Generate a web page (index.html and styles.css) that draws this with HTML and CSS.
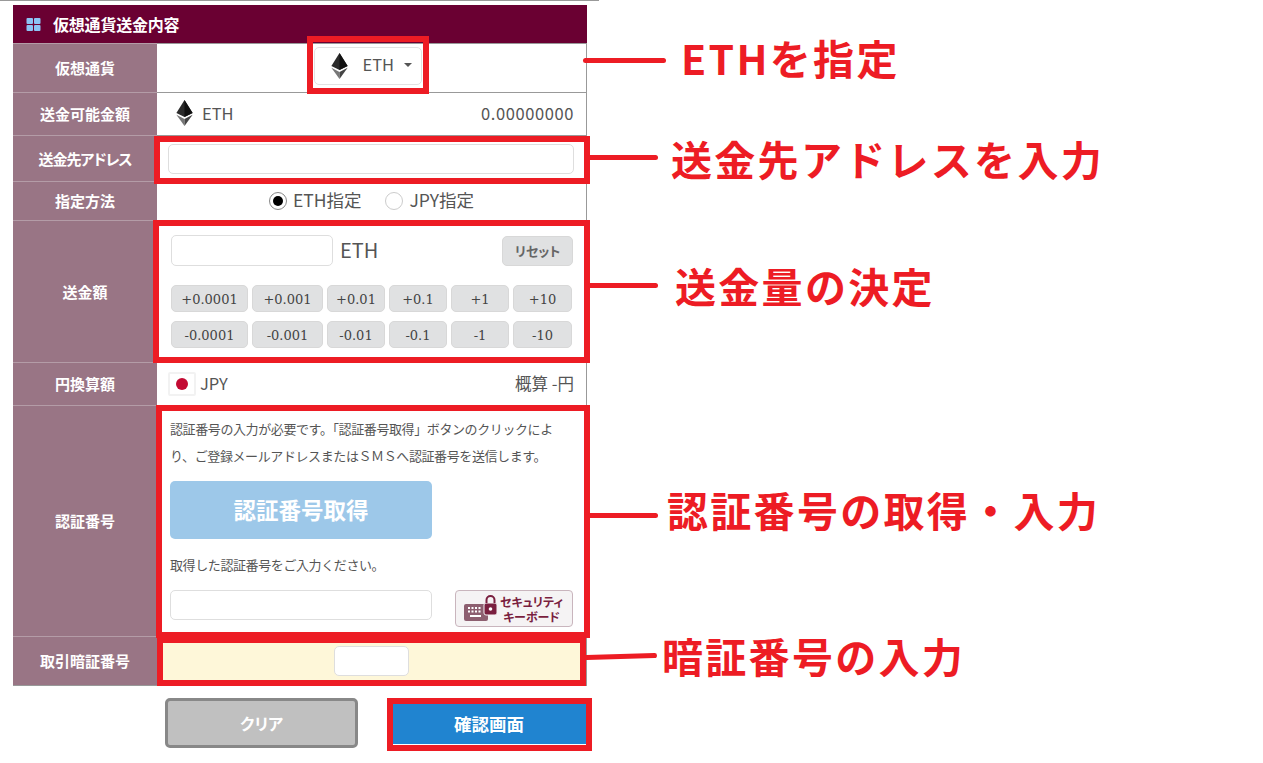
FILE: index.html
```html
<!DOCTYPE html>
<html lang="ja">
<head>
<meta charset="utf-8">
<title>仮想通貨送金内容</title>
<link rel="stylesheet" href="styles.css">
</head>
<body>
<svg width="0" height="0" class="defs">
  <symbol id="eth" viewBox="0 0 20 32">
    <polygon points="10,0 0,16 10,21 20,16" fill="#2b2b2b"/>
    <polygon points="10,0 10,21 20,16" fill="#111"/>
    <polygon points="0,18 10,32 10,23.500" fill="#777"/>
    <polygon points="20,18 10,32 10,23.500" fill="#444"/>
  </symbol>
</svg>
<div class="page">
  <div class="topline"></div>
  <div class="panel">
    <div class="panel-head">
      <svg class="grid-icon" width="15" height="13" viewBox="0 0 14 13"><rect width="6.500" height="6" rx="1"/><rect x="7.500" width="6.500" height="6" rx="1"/><rect y="7" width="6.500" height="6" rx="1"/><rect x="7.500" y="7" width="6.500" height="6" rx="1"/></svg>
      <span>仮想通貨送金内容</span>
    </div>
    <div class="row h49"><div class="label">仮想通貨</div>
      <div class="value center">
        <div class="select"><svg class="eth" width="17" height="26"><use href="#eth"/></svg><span>ETH</span><i class="caret"></i></div>
      </div>
    </div>
    <div class="row h43"><div class="label">送金可能金額</div>
      <div class="value between">
        <div class="coin"><svg class="eth" width="17" height="26"><use href="#eth"/></svg><span>ETH</span></div>
        <span class="digits">0.00000000</span>
      </div>
    </div>
    <div class="row h46"><div class="label tight">送金先アドレス</div>
      <div class="value"><div class="input wide"></div></div>
    </div>
    <div class="row h39"><div class="label">指定方法</div>
      <div class="value center radios">
        <label class="radio"><i class="dot on"></i>ETH指定</label>
        <label class="radio"><i class="dot"></i>JPY指定</label>
      </div>
    </div>
    <div class="row h142"><div class="label">送金額</div>
      <div class="value amount">
        <div class="amount-top">
          <div class="input amount-input"></div><span class="unit">ETH</span>
          <div class="reset">リセット</div>
        </div>
        <div class="steps">
          <div class="step">+0.0001</div><div class="step">+0.001</div><div class="step">+0.01</div><div class="step">+0.1</div><div class="step">+1</div><div class="step">+10</div>
          <div class="step">-0.0001</div><div class="step">-0.001</div><div class="step">-0.01</div><div class="step">-0.1</div><div class="step">-1</div><div class="step">-10</div>
        </div>
      </div>
    </div>
    <div class="row h43"><div class="label">円換算額</div>
      <div class="value between">
        <div class="coin"><span class="flag"><i></i></span><span class="jpy">JPY</span></div>
        <span>概算 -円</span>
      </div>
    </div>
    <div class="row h231"><div class="label">認証番号</div>
      <div class="value auth">
        <p class="note">認証番号の入力が必要です。「認証番号取得」ボタンのクリックによ<br>り、ご登録メールアドレスまたはＳＭＳへ認証番号を送信します。</p>
        <div class="auth-btn">認証番号取得</div>
        <p class="note2">取得した認証番号をご入力ください。</p>
        <div class="auth-bottom">
          <div class="input auth-input"></div>
          <div class="secure">
            <svg width="34" height="28" viewBox="0 0 34 28"><rect x="0" y="9" width="24" height="17" rx="2" fill="#8d5f70"/><g fill="#fff"><rect x="4" y="12" width="2" height="2"/><rect x="7.500" y="12" width="2" height="2"/><rect x="11" y="12" width="2" height="2"/><rect x="14.500" y="12" width="2" height="2"/><rect x="4" y="15.500" width="2" height="2"/><rect x="7.500" y="15.500" width="2" height="2"/><rect x="11" y="15.500" width="2" height="2"/><rect x="14.500" y="15.500" width="2" height="2"/><rect x="6" y="20" width="11" height="2"/></g><rect x="20" y="8" width="13" height="12" rx="2" fill="#7a1f3f" stroke="#f4f2f3"/><path d="M22.500 8V5a4 4 0 0 1 8 0v3" fill="none" stroke="#7a1f3f" stroke-width="2"/><circle cx="26.500" cy="14" r="1.800" fill="#fff"/></svg>
            <span>セキュリティ<br>キーボード</span>
          </div>
        </div>
      </div>
    </div>
    <div class="row h50 last"><div class="label">取引暗証番号</div>
      <div class="value center pin"><div class="input pin-input"></div></div>
    </div>
  </div>
  <div class="actions">
    <div class="btn-clear">クリア</div>
    <div class="btn-confirm">確認画面</div>
  </div>

  <div class="mark m1"></div>
  <div class="mark m2"></div>
  <div class="mark m3"></div>
  <div class="mark m4"></div>
  <div class="mark m5"></div>
  <div class="mark m6"></div>
  <div class="lead l1"></div>
  <div class="lead l2"></div>
  <div class="lead l3"></div>
  <div class="lead l4"></div>
  <div class="lead l5"></div>
  <div class="note-text t1">ETHを指定</div>
  <div class="note-text t2">送金先アドレスを入力</div>
  <div class="note-text t3">送金量の決定</div>
  <div class="note-text t4">認証番号の取得・入力</div>
  <div class="note-text t5">暗証番号の入力</div>
</div>
</body>
</html>
```
FILE: styles.css
```css
* { box-sizing: border-box; }
html, body { margin: 0; padding: 0; background: #fff; }
body { font-family: "Noto Sans CJK JP", "Noto Sans", sans-serif; color: #555; font-size: 16.500px; overflow: hidden; }
.defs { position: absolute; }
.page { position: relative; width: 1263px; height: 763px; overflow: hidden; }
.topline { width: 599px; height: 1px; background: #999; margin-bottom: 4px; }

.panel { width: 574px; margin-left: 13px; }
.panel-head { height: 38px; background: #6a0032; color: #fff; font-weight: 700; font-size: 16px; display: flex; align-items: center; padding-left: 13px; gap: 12px; letter-spacing: -0.200px; }
.panel-head span { margin-top: -1px; }
.grid-icon { fill: #8cc4f4; }

.row { display: flex; }
.h49 { height: 49px; } .h43 { height: 43px; } .h46 { height: 46px; } .h39 { height: 39px; }
.h142 { height: 142px; } .h231 { height: 231px; } .h50 { height: 50px; }
.label { width: 144px; flex: none; background: #997585; color: #fff; font-weight: 700; font-size: 15px; font-feature-settings: "palt"; padding-bottom: 1px; display: flex; align-items: center; justify-content: center; border-top: 1px solid #b49ca7; }
.tight { letter-spacing: -1px; }
.value { flex: 1; border-top: 1px solid #999; border-right: 1px solid #999; padding: 0 12px 0 11px; display: flex; align-items: center; min-width: 0; }
.center { justify-content: center; }
.between { justify-content: space-between; padding: 0 12px 3px 19px; }
.digits { letter-spacing: 0.600px; }

.input { background: #fff; border: 1px solid #dedede; border-radius: 5px; }
.wide { width: 407px; height: 30px; }

.select { width: 108px; height: 38px; margin: 3px 0 0 -7px; align-self: flex-start; border: 1px solid #e2e2e2; border-radius: 5px; display: flex; align-items: center; padding-left: 16px; }
.select span { margin-top: -4px; }
.select .eth { margin-right: 15px; }
.caret { width: 0; height: 0; border-left: 4px solid transparent; border-right: 4px solid transparent; border-top: 4px solid #555; margin: -3px 0 0 10px; }
.coin { display: flex; align-items: center; gap: 9px; }
.jpy { margin-left: -5px; }
.flag { width: 28px; height: 24px; margin-left: -8px; margin-top: 3px; border: 2px solid #f2f2f2; border-radius: 2px; display: flex; align-items: center; justify-content: center; }
.flag i { width: 12px; height: 12px; border-radius: 50%; background: #c30a32; }

.radios { gap: 21px; font-size: 17.500px; padding: 0 0 3px; }
.radio { display: flex; align-items: center; gap: 6px; }
.dot { width: 18px; height: 18px; margin-top: 3px; border-radius: 50%; border: 1px solid #ccc; background: #fff; display: flex; align-items: center; justify-content: center; }
.dot.on { border-color: #888; }
.dot.on::after { content: ""; width: 10px; height: 10px; border-radius: 50%; background: #000; }
.radio + .radio { margin-left: 3px; }

.amount { flex-direction: column; align-items: stretch; padding: 14px 13px 0 14px; }
.amount-top { display: flex; align-items: center; height: 31px; }
.amount-input { width: 162px; height: 31px; }
.unit { font-size: 20px; margin: -3px 0 0 7px; flex: 1; }
.reset { width: 71px; height: 30px; margin-top: 1px; padding-bottom: 2px; background: #e0e1e2; border: 1px solid #d8d8d8; border-radius: 5px; font-weight: 700; font-size: 13px; font-feature-settings: "palt"; color: #666; display: flex; align-items: center; justify-content: center; }
.steps { display: grid; grid-template-columns: 77px 71px 58px 58px 58px 59px; gap: 9px 4px; margin-top: 19px; }
.step { height: 27px; padding-top: 1px; background: #e0e1e2; border: 1px solid #d8d8d8; border-radius: 5px; font-family: "DejaVu Serif", serif; font-size: 13px; color: #444; display: flex; align-items: center; justify-content: center; }

.auth { flex-direction: column; align-items: stretch; padding: 9px 0 0 13px; }
.note { margin: 0; font-size: 13px; line-height: 27px; color: #555; letter-spacing: -0.400px; height: 54px; white-space: nowrap; }
.auth-btn { width: 262px; height: 58px; margin-top: 12px; padding-bottom: 3px; background: #9dc8e9; border-radius: 5px; color: #fff; font-weight: 700; font-size: 22.500px; display: flex; align-items: center; justify-content: center; }
.note2 { margin: 15px 0 0; font-size: 13px; line-height: 22px; color: #555; letter-spacing: -0.400px; }
.auth-bottom { display: flex; gap: 23px; align-items: flex-start; margin-top: 14px; }
.auth-input { width: 262px; height: 30px; flex: none; }
.secure { width: 118px; height: 37px; flex: none; background: #f5f3f4; border: 1px solid #c9b5bd; border-radius: 4px; display: flex; align-items: center; padding-left: 8px; gap: 2px; color: #7a1f3f; font-size: 12px; line-height: 15px; font-weight: 700; font-feature-settings: "palt"; }
.secure span { text-align: center; }

.pin { background: #fef7d9; border-bottom: 1px solid #999; padding: 0; }
.last .label { border-bottom: 1px solid #999; }
.pin-input { width: 75px; height: 30px; }

.actions { display: flex; margin: 12px 0 0 165px; align-items: center; gap: 34px; }
.btn-clear { width: 193px; height: 50px; background: #c0c0c0; border: 3px solid #888; border-radius: 5px; color: #fff; font-weight: 700; font-size: 16px; font-feature-settings: "palt"; display: flex; align-items: center; justify-content: center; }
.btn-confirm { width: 194px; height: 42px; background: #2084d0; color: #fff; font-weight: 700; font-size: 17.500px; display: flex; align-items: center; justify-content: center; }

.mark { position: absolute; border: 6px solid #ed1c24; }
.m1 { left: 307px; top: 36px; width: 122px; height: 58px; }
.m2 { left: 154px; top: 136px; width: 436px; height: 48px; }
.m3 { left: 153px; top: 220px; width: 437px; height: 143px; }
.m4 { left: 156px; top: 405px; width: 434px; height: 233px; }
.m5 { left: 157px; top: 637px; width: 429px; height: 49px; }
.m6 { left: 387px; top: 698px; width: 205px; height: 53px; }

.lead { position: absolute; height: 5px; background: #ed1c24; border-radius: 3px; }
.l1 { left: 583px; top: 58px; width: 83px; }
.l2 { left: 588px; top: 155px; width: 70px; }
.l3 { left: 588px; top: 283px; width: 70px; }
.l4 { left: 588px; top: 513px; width: 70px; }
.l5 { left: 584px; top: 654px; width: 73px; transform: rotate(-1.500deg); }

.note-text { position: absolute; color: #ed1c24; font-weight: 700; font-size: 41px; line-height: 46px; letter-spacing: 2.300px; white-space: nowrap; }
.t1 { left: 681px; top: 34px; }
.t2 { left: 671px; top: 135px; }
.t3 { left: 675px; top: 262px; }
.t4 { left: 667px; top: 486px; }
.t5 { left: 662px; top: 632px; }
```
